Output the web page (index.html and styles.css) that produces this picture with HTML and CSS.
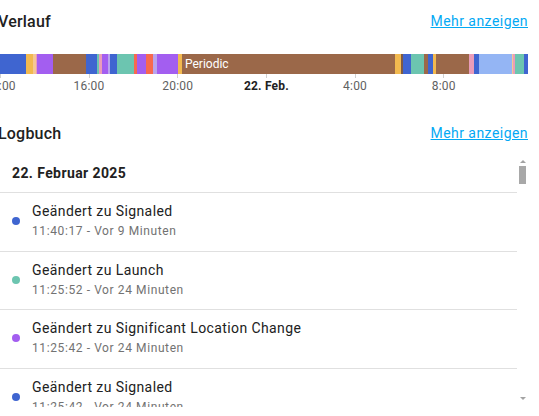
FILE: index.html
```html
<!DOCTYPE html>
<html lang="de">
<head>
    <meta charset="UTF-8">
    <meta name="viewport" content="width=device-width, initial-scale=1.0">
    <title>Verlauf &amp; Logbuch</title>
    <link rel="stylesheet" href="styles.css">
</head>
<body>
    <div class="page">
        <!-- Verlauf -->
        <div class="section-head">
            <span class="title">Verlauf</span>
            <a href="#" class="more">Mehr anzeigen</a>
        </div>

        <div class="timeline">
            <span class="seg blue" style="width:28px"></span>
            <span class="seg yellow" style="width:7px"></span>
            <span class="seg peach" style="width:3px"></span>
            <span class="seg pink" style="width:1px"></span>
            <span class="seg purple" style="width:16px"></span>
            <span class="seg brown" style="width:33px"></span>
            <span class="seg blue" style="width:11px"></span>
            <span class="seg teal" style="width:2px"></span>
            <span class="seg pink" style="width:3px"></span>
            <span class="seg purple" style="width:6px"></span>
            <span class="seg lavender" style="width:2px"></span>
            <span class="seg blue" style="width:7px"></span>
            <span class="seg teal" style="width:17px"></span>
            <span class="seg red" style="width:3px"></span>
            <span class="seg purple" style="width:9px"></span>
            <span class="seg red" style="width:7px"></span>
            <span class="seg lavender" style="width:4px"></span>
            <span class="seg purple" style="width:21px"></span>
            <span class="seg yellow" style="width:4px"></span>
            <span class="seg brown labelled" style="width:213px">Periodic</span>
            <span class="seg yellow" style="width:6px"></span>
            <span class="seg dark-brown" style="width:2px"></span>
            <span class="seg blue" style="width:8px"></span>
            <span class="seg teal" style="width:13px"></span>
            <span class="seg brown" style="width:4px"></span>
            <span class="seg blue" style="width:5px"></span>
            <span class="seg yellow" style="width:3px"></span>
            <span class="seg brown" style="width:33px"></span>
            <span class="seg pink" style="width:5px"></span>
            <span class="seg blue" style="width:5px"></span>
            <span class="seg light-blue" style="width:33px"></span>
            <span class="seg peach" style="width:1px"></span>
            <span class="seg pink" style="width:2px"></span>
            <span class="seg teal" style="width:9px"></span>
            <span class="seg blue" style="width:4px"></span>
        </div>

        <div class="axis">
            <span class="tick">12:00</span>
            <span class="tick">16:00</span>
            <span class="tick">20:00</span>
            <span class="tick day">22. Feb.</span>
            <span class="tick">4:00</span>
            <span class="tick">8:00</span>
        </div>

        <!-- Logbuch -->
        <div class="section-head logbook-head">
            <span class="title">Logbuch</span>
            <a href="#" class="more">Mehr anzeigen</a>
        </div>

        <div class="logbook">
            <div class="entries">
                <div class="date">22. Februar 2025</div>

                <div class="entry">
                    <span class="dot blue"></span>
                    <div class="entry-text">
                        <div class="message">Geändert zu Signaled</div>
                        <div class="time">11:40:17 - Vor 9 Minuten</div>
                    </div>
                </div>

                <div class="entry">
                    <span class="dot teal"></span>
                    <div class="entry-text">
                        <div class="message">Geändert zu Launch</div>
                        <div class="time">11:25:52 - Vor 24 Minuten</div>
                    </div>
                </div>

                <div class="entry">
                    <span class="dot purple"></span>
                    <div class="entry-text">
                        <div class="message">Geändert zu Significant Location Change</div>
                        <div class="time">11:25:42 - Vor 24 Minuten</div>
                    </div>
                </div>

                <div class="entry">
                    <span class="dot blue"></span>
                    <div class="entry-text">
                        <div class="message">Geändert zu Signaled</div>
                        <div class="time">11:25:42 - Vor 24 Minuten</div>
                    </div>
                </div>
            </div>

            <div class="scrollbar">
                <span class="arrow up"></span>
                <span class="thumb"></span>
                <span class="arrow down"></span>
            </div>
        </div>
    </div>
</body>
</html>
```

FILE: styles.css
```css
body {
    font-family: Roboto, 'Noto Sans', sans-serif;
    background-color: #fff;
    margin: 0;
    padding: 0;
    color: #212121;
    overflow: hidden;
}
.page {
    margin: 0 11px 0 -2px;
}
.section-head {
    display: flex;
    justify-content: space-between;
    align-items: center;
    height: 42px;
}
.logbook-head {
    margin-top: 18px;
}
.title {
    font-size: 16px;
    font-weight: 500;
    letter-spacing: 0.2px;
}
.more {
    font-size: 14px;
    color: #03a9f4;
    text-decoration: underline;
    letter-spacing: 0.45px;
}

/* history bar */
.timeline {
    display: flex;
    height: 20px;
    margin-top: 12px;
}
.seg {
    flex-shrink: 0;
    height: 100%;
    overflow: hidden;
    white-space: nowrap;
    color: #fff;
    font-size: 12px;
    line-height: 20px;
    box-sizing: border-box;
}
.seg.labelled {
    padding-left: 3px;
}
.blue { background-color: #3f65d0; }
.yellow { background-color: #f2b94f; }
.peach { background-color: #f5c794; }
.pink { background-color: #ea9cb9; }
.purple { background-color: #a35ef0; }
.brown { background-color: #9b6849; }
.dark-brown { background-color: #7d5a44; }
.teal { background-color: #6cc5b0; }
.red { background-color: #f7694f; }
.lavender { background-color: #b9a4ee; }
.light-blue { background-color: #94b5f4; }

.axis {
    display: flex;
    height: 20px;
    margin-left: -42px;
}
.tick {
    flex: 0 0 88.7px;
    display: flex;
    flex-direction: column;
    align-items: center;
    font-size: 12px;
    line-height: 14px;
    color: #616161;
    letter-spacing: 0.2px;
}
.tick::before {
    content: "";
    width: 1px;
    height: 4px;
    margin-bottom: 1px;
    background-color: #d0d0d0;
}
.tick.day {
    font-weight: 700;
    color: #212121;
}

/* logbook */
.logbook {
    display: flex;
    height: 253px;
}
.entries {
    flex: 1;
    overflow: hidden;
}
.date {
    height: 38px;
    line-height: 38px;
    padding-left: 14px;
    font-size: 14px;
    font-weight: 700;
    letter-spacing: 0.4px;
    border-bottom: 1px solid #e0e0e0;
}
.entry {
    display: flex;
    align-items: center;
    gap: 12px;
    padding: 8px 0 9.5px 14px;
    border-bottom: 1px solid #e0e0e0;
}
.dot {
    width: 8px;
    height: 8px;
    border-radius: 50%;
    flex-shrink: 0;
}
.message {
    font-size: 14px;
    line-height: 20px;
    letter-spacing: 0.4px;
}
.time {
    font-size: 12px;
    line-height: 20px;
    color: #727272;
    letter-spacing: 0.6px;
}

.scrollbar {
    flex: 0 0 11px;
    display: flex;
    flex-direction: column;
    align-items: center;
}
.arrow {
    width: 0;
    height: 0;
    border-left: 3px solid transparent;
    border-right: 3px solid transparent;
}
.arrow.up {
    margin-top: 6px;
    border-bottom: 3px solid #a3a3a3;
}
.arrow.down {
    margin-top: auto;
    margin-bottom: 7px;
    border-top: 3px solid #a3a3a3;
}
.thumb {
    width: 7px;
    height: 18px;
    margin-top: 3px;
    background-color: #a8a8a8;
}
```
